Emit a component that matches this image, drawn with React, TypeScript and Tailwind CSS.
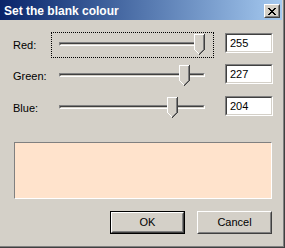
import React from "react";

const FONT = "font-['Liberation_Sans',Arial,sans-serif]";

const channels = [
  { label: "Red:", value: 255, focused: true },
  { label: "Green:", value: 227, focused: false },
  { label: "Blue:", value: 204, focused: false },
];

// pixel map of the classic pointed trackbar thumb (11x21)
function Thumb() {
  const px: { x: number; y: number; w: number; h: number; c: string }[] = [
    { x: 0, y: 0, w: 11, h: 16, c: "#d4d0c8" },
    { x: 0, y: 0, w: 10, h: 1, c: "#ffffff" },
    { x: 0, y: 0, w: 1, h: 16, c: "#ffffff" },
    { x: 10, y: 0, w: 1, h: 16, c: "#404040" },
    { x: 9, y: 1, w: 1, h: 15, c: "#808080" },
  ];
  for (let i = 0; i < 5; i++) {
    const y = 16 + i;
    const l = i + 1;
    const r = 9 - i;
    if (r - l > 0) px.push({ x: l, y, w: r - l, h: 1, c: "#d4d0c8" });
    if (l < 5) px.push({ x: l, y, w: 1, h: 1, c: "#ffffff" });
    if (r - 1 > l) px.push({ x: r - 1, y, w: 1, h: 1, c: "#808080" });
    px.push({ x: r, y, w: 1, h: 1, c: "#404040" });
  }
  return (
    <svg width="11" height="21" viewBox="0 0 11 21" shapeRendering="crispEdges">
      {px.map((p, i) => (
        <rect key={i} x={p.x} y={p.y} width={p.w} height={p.h} fill={p.c} />
      ))}
    </svg>
  );
}

function CloseGlyph() {
  const rows = [
    [0, 6],
    [1, 5],
    [2, 4],
    [3],
    [2, 4],
    [1, 5],
    [0, 6],
  ];
  return (
    <svg width="8" height="7" viewBox="0 0 8 7" shapeRendering="crispEdges">
      {rows.flatMap((xs, y) =>
        xs.map((x) => <rect key={`${x}-${y}`} x={x} y={y} width="2" height="1" fill="#000" />),
      )}
    </svg>
  );
}

function Slider({ value, focused }: { value: number; focused: boolean }) {
  const left = Math.round(142 - ((255 - value) * 15) / 28);
  return (
    <div
      className={`relative w-[163px] h-[26px] border border-dotted ${
        focused ? "border-black" : "border-transparent"
      }`}
    >
      <div className="ml-[7px] mt-[9px] w-[146px] h-[4px] border border-t-[#808080] border-l-[#808080] border-b-white border-r-white">
        <div className="h-[2px] border border-t-[#404040] border-l-[#404040] border-b-[#d4d0c8] border-r-[#d4d0c8]" />
      </div>
      <div className="absolute top-[1px]" style={{ left }}>
        <Thumb />
      </div>
    </div>
  );
}

function TextBox({ value }: { value: number }) {
  return (
    <div className="ml-[11px] mt-[1px] w-[48px] h-[20px] border border-t-[#808080] border-l-[#808080] border-b-white border-r-white">
      <div className="h-full bg-white border border-t-[#404040] border-l-[#404040] border-b-[#d4d0c8] border-r-[#d4d0c8] flex items-center pl-[3px] text-[11px] leading-[13px] text-black">
        {value}
      </div>
    </div>
  );
}

function Button({ children, primary }: { children: React.ReactNode; primary?: boolean }) {
  if (primary) {
    return (
      <div className="w-[75px] h-[23px] border border-black">
        <div className="h-full border border-t-white border-l-white border-b-[#404040] border-r-[#404040]">
          <div className="h-full border border-t-[#d4d0c8] border-l-[#d4d0c8] border-b-[#808080] border-r-[#808080] flex items-center justify-center text-[11px] text-black">
            {children}
          </div>
        </div>
      </div>
    );
  }
  return (
    <div className="w-[75px] h-[23px] border border-t-white border-l-white border-b-[#404040] border-r-[#404040]">
      <div className="h-full border border-t-[#d4d0c8] border-l-[#d4d0c8] border-b-[#808080] border-r-[#808080] flex items-center justify-center text-[11px] text-black">
        {children}
      </div>
    </div>
  );
}

export default function App() {
  return (
    <div className={`${FONT} w-[285px] h-[248px] bg-[#d4d0c8] border-r border-b border-r-[#404040] border-b-[#404040]`}>
      <div className="h-full border-r border-b border-r-[#808080] border-b-[#808080] pr-[1px]">
        {/* Title bar */}
        <div className="h-[20px] flex items-start bg-linear-to-r from-[#0a246a] to-[#a6caf0]">
          <div className="pl-[4px] pt-[4px] text-[12px] leading-[14px] font-bold text-white">
            Set the blank colour
          </div>
          <div className="ml-auto mr-[2px] mt-[4px] w-[16px] h-[14px] border border-t-white border-l-white border-b-[#404040] border-r-[#404040] bg-[#d4d0c8]">
            <div className="h-full border border-t-[#d4d0c8] border-l-[#d4d0c8] border-b-[#808080] border-r-[#808080] flex items-center justify-center">
              <CloseGlyph />
            </div>
          </div>
        </div>

        {/* Channel rows */}
        <div className="mt-[12px] flex flex-col gap-[5px]">
          {channels.map((ch, i) => (
            <div key={ch.label} className={`flex items-start h-[26px] ${i === 2 ? "mt-[1px]" : ""}`}>
              <div className="w-[51px] h-[26px] pl-[13px] flex items-center text-[11px] leading-[13px] text-black">
                {ch.label}
              </div>
              <Slider value={ch.value} focused={ch.focused} />
              <TextBox value={ch.value} />
            </div>
          ))}
        </div>

        {/* Colour preview */}
        <div className="ml-[14px] mt-[21px] w-[258px] h-[57px] border border-t-[#808080] border-l-[#808080] border-b-white border-r-white bg-[#ffe3cc]" />

        {/* Buttons */}
        <div className="ml-[110px] mt-[12px] flex gap-[12px]">
          <Button primary>OK</Button>
          <Button>Cancel</Button>
        </div>
      </div>
    </div>
  );
}
